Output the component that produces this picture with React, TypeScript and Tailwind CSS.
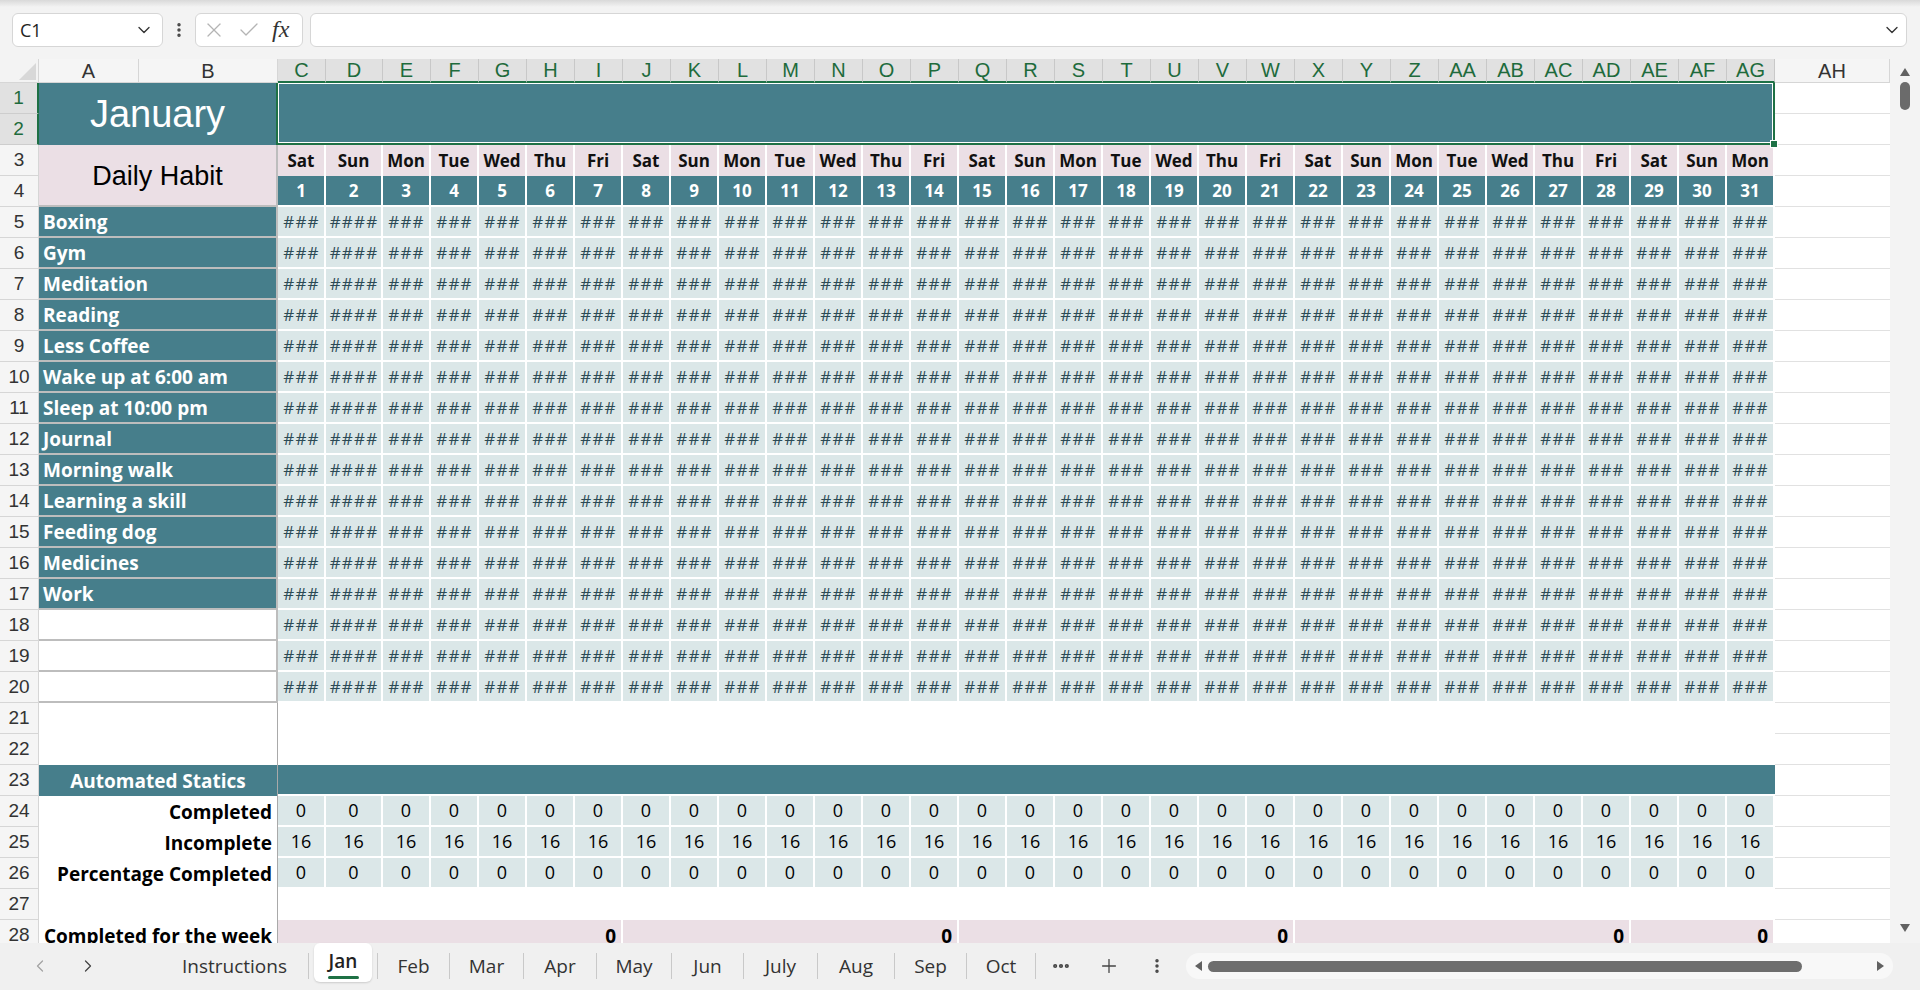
import { ChevronDown, ChevronLeft, ChevronRight, X, Check, Plus, EllipsisVertical, Ellipsis } from "lucide-react";

const COLS = Array.from({ length: 34 }, (_, i) =>
  i < 26 ? String.fromCharCode(65 + i) : "A" + String.fromCharCode(65 + i - 26)
);
const DAY_NAMES = ["Sat", "Sun", "Mon", "Tue", "Wed", "Thu", "Fri"];
const DAYS = Array.from({ length: 31 }, (_, i) => i + 1);
const HABITS = [
  "Boxing",
  "Gym",
  "Meditation",
  "Reading",
  "Less Coffee",
  "Wake up at 6:00 am",
  "Sleep at 10:00 pm",
  "Journal",
  "Morning walk",
  "Learning a skill",
  "Feeding dog",
  "Medicines",
  "Work",
  "",
  "",
  "",
];
const TABS = [
  { name: "Jan", w: "w-[68px]" },
  { name: "Feb", w: "w-[71px]" },
  { name: "Mar", w: "w-[73px]" },
  { name: "Apr", w: "w-[72px]" },
  { name: "May", w: "w-[74px]" },
  { name: "Jun", w: "w-[71px]" },
  { name: "July", w: "w-[73px]" },
  { name: "Aug", w: "w-[76px]" },
  { name: "Sep", w: "w-[71px]" },
  { name: "Oct", w: "w-[68px]" },
];

function RowHead({ n, active }: { n: number; active?: boolean }) {
  return (
    <div
      className={
        active
          ? "flex items-center justify-center text-[19px] bg-[#e1e1e1] text-[#1e6b3c] border-r-2 border-r-[#1e7145] border-b border-b-[#cdcdcd]"
          : "flex items-center justify-center text-[19px] bg-[#f5f5f5] text-[#333] border-r border-b border-[#d6d6d6]"
      }
    >
      {n}
    </div>
  );
}

function AH() {
  return <div className="bg-white border-b border-[#e1e1e1]" />;
}

function FormulaBar() {
  return (
    <div className="h-[59px] shrink-0 bg-[#f3f3f3]">
      <div className="h-[7px] bg-linear-to-b from-[#d9d9d9] to-[#f3f3f3]" />
      <div className="flex items-center h-[34px] mt-[6px]">
        <div className="ml-[12px] w-[151px] h-full bg-white border border-[#d6d6d6] rounded-md flex items-center justify-between pl-[7px] pr-[8px] text-[18px] text-[#222] font-['Open_Sans',sans-serif]">
          <span>C1</span>
          <ChevronDown size={20} strokeWidth={1.6} className="text-[#333]" />
        </div>
        <div className="w-[32px] flex justify-center text-[#444]">
          <EllipsisVertical size={18} strokeWidth={2.6} />
        </div>
        <div className="w-[108px] h-full bg-white border border-[#d6d6d6] rounded-md flex items-center pl-[6px] gap-[11px]">
          <X size={24} strokeWidth={1.3} className="text-[#b4b4b4]" />
          <Check size={24} strokeWidth={1.3} className="text-[#b4b4b4]" />
          <span className="text-[24px] italic text-[#333] font-['Liberation_Serif',serif] leading-none -mt-[3px]">fx</span>
        </div>
        <div className="ml-[7px] mr-[13px] flex-1 h-full bg-white border border-[#d6d6d6] rounded-md flex items-center justify-end pr-[4px]">
          <ChevronDown size={20} strokeWidth={1.6} className="text-[#333]" />
        </div>
      </div>
    </div>
  );
}

function Sheet() {
  const teal = "bg-[#467e8b]";
  const dataCell =
    "bg-[#dbe7e8] border-r-2 border-b-2 border-white flex items-center justify-center";
  const rows: React.ReactNode[] = [];

  // header row
  rows.push(
    <div key="corner" className="bg-[#f3f3f3] border-r border-b border-[#d6d6d6] flex items-end justify-end p-[2px]">
      <svg width="17" height="17" viewBox="0 0 17 17">
        <polygon points="17,0 17,17 0,17" fill="#d8d8d8" />
      </svg>
    </div>
  );
  COLS.forEach((c, i) => {
    const sel = i >= 2 && i <= 32;
    rows.push(
      <div
        key={"h" + c}
        className={
          sel
            ? "flex items-center justify-center text-[20px] bg-[#e1e1e1] text-[#1e6b3c] border-r border-r-[#c8c8c8] border-b-2 border-b-[#1e7145]"
            : "flex items-center justify-center text-[20px] bg-[#f5f5f5] text-[#333] border-r border-b border-[#d6d6d6]"
        }
      >
        {c}
      </div>
    );
  });

  // rows 1-2
  rows.push(<RowHead key="r1" n={1} active />);
  rows.push(
    <div
      key="jan"
      className={`col-span-2 row-span-2 ${teal} text-white text-[38px] flex items-center justify-center border-r-2 border-[#1e7145]`}
    >
      January
    </div>
  );
  rows.push(
    <div key="sel" className="col-span-31 row-span-2 relative border-2 border-l-0 border-t-0 border-[#1e7145]">
      <div className={`h-full ${teal} border border-white`} />
      <div className="absolute -right-[5px] -bottom-[5px] w-[8px] h-[8px] bg-[#1e7145] border border-white" />
    </div>
  );
  rows.push(<AH key="ah1" />);
  rows.push(<RowHead key="r2" n={2} active />);
  rows.push(<AH key="ah2" />);

  // rows 3-4
  rows.push(<RowHead key="r3" n={3} />);
  rows.push(
    <div
      key="dh"
      className="col-span-2 row-span-2 bg-[#ebdfe5] text-black text-[27px] flex items-center justify-center border-r-2 border-b-2 border-[#bdbdbd] pt-[3px]"
    >
      Daily Habit
    </div>
  );
  DAYS.forEach((d) =>
    rows.push(
      <div
        key={"dn" + d}
        className="bg-[#ebdfe5] border-r-2 border-white flex items-center justify-center font-bold text-[17px] text-[#111] font-['Open_Sans',sans-serif]"
      >
        {DAY_NAMES[(d - 1) % 7]}
      </div>
    )
  );
  rows.push(<AH key="ah3" />);
  rows.push(<RowHead key="r4" n={4} />);
  DAYS.forEach((d) =>
    rows.push(
      <div
        key={"dd" + d}
        className={`${teal} border-r-2 border-b-2 border-white flex items-center justify-center font-bold text-[17px] text-white font-['Open_Sans',sans-serif]`}
      >
        {d}
      </div>
    )
  );
  rows.push(<AH key="ah4" />);

  // habits rows 5-20
  HABITS.forEach((h, idx) => {
    const r = idx + 5;
    rows.push(<RowHead key={"r" + r} n={r} />);
    rows.push(
      <div
        key={"hb" + r}
        className={`col-span-2 ${h ? teal : "bg-white"} border-r-2 border-b-2 border-[#bdbdbd] flex items-center pl-[4px] pt-[2px] text-white font-bold text-[19px] font-['Open_Sans',sans-serif] whitespace-nowrap`}
      >
        {h}
      </div>
    );
    DAYS.forEach((d) =>
      rows.push(
        <div
          key={`c${r}-${d}`}
          className={`${dataCell} text-[17px] tracking-[1.2px] pl-[1px] text-[#2b4a55] font-['Open_Sans',sans-serif]`}
        >
          {d === 2 ? "####" : "###"}
        </div>
      )
    );
    rows.push(<AH key={"ah" + r} />);
  });

  // rows 21-22
  [21, 22].forEach((r) => {
    rows.push(<RowHead key={"r" + r} n={r} />);
    rows.push(<div key={"ab" + r} className="col-span-2 bg-white border-r border-[#a9a9a9]" />);
    rows.push(<div key={"cg" + r} className="col-span-31 bg-white" />);
    rows.push(<AH key={"ah" + r} />);
  });

  // row 23
  rows.push(<RowHead key="r23" n={23} />);
  rows.push(
    <div
      key="auto"
      className={`col-span-2 ${teal} border-r border-[#a9a9a9] flex items-center justify-center pt-[2px] text-white font-bold text-[19px] font-['Open_Sans',sans-serif]`}
    >
      Automated Statics
    </div>
  );
  rows.push(<div key="auto2" className={`col-span-31 ${teal} border-b-2 border-white`} />);
  rows.push(<AH key="ah23" />);

  // rows 24-26
  const stats: [string, string][] = [
    ["Completed", "0"],
    ["Incomplete", "16"],
    ["Percentage Completed", "0"],
  ];
  stats.forEach(([label, v], i) => {
    const r = 24 + i;
    rows.push(<RowHead key={"r" + r} n={r} />);
    rows.push(
      <div
        key={"st" + r}
        className="col-span-2 bg-white border-r border-[#a9a9a9] flex items-center justify-end pr-[5px] pt-[2px] text-black font-bold text-[19px] font-['Open_Sans',sans-serif] whitespace-nowrap"
      >
        {label}
      </div>
    );
    DAYS.forEach((d) =>
      rows.push(
        <div key={`s${r}-${d}`} className={`${dataCell} text-[18px] text-black font-['Open_Sans',sans-serif]`}>
          {v}
        </div>
      )
    );
    rows.push(<AH key={"ah" + r} />);
  });

  // row 27
  rows.push(<RowHead key="r27" n={27} />);
  rows.push(<div key="ab27" className="col-span-2 bg-white border-r border-[#a9a9a9]" />);
  rows.push(<div key="cg27" className="col-span-31 bg-white" />);
  rows.push(<AH key="ah27" />);

  // row 28
  rows.push(<RowHead key="r28" n={28} />);
  rows.push(
    <div
      key="wk"
      className="col-span-2 bg-white border-r border-[#a9a9a9] flex items-center pl-[5px] pt-[2px] text-black font-bold text-[19px] font-['Open_Sans',sans-serif] whitespace-nowrap overflow-hidden"
    >
      Completed for the week
    </div>
  );
  ["col-span-7", "col-span-7", "col-span-7", "col-span-7", "col-span-3"].forEach((span, i) =>
    rows.push(
      <div
        key={"wk" + i}
        className={`${span} bg-[#ebdfe5] border-r-2 border-white flex items-center justify-end pr-[5px] pt-[2px] text-black font-bold text-[19px] font-['Open_Sans',sans-serif]`}
      >
        0
      </div>
    )
  );
  rows.push(<AH key="ah28" />);

  return (
    <div className="grid grid-cols-[39px_100px_139px_48px_57px_repeat(29,48px)_1fr] grid-rows-[24px_repeat(28,31px)] text-[18px] font-['Liberation_Sans',Arial,sans-serif]">
      {rows}
    </div>
  );
}

function VScroll() {
  return (
    <div className="w-[30px] shrink-0 bg-[#f3f3f3] flex flex-col items-center">
      <svg width="12" height="10" viewBox="0 0 12 10" className="mt-[8px]">
        <polygon points="6,1 11,9 1,9" fill="#616161" />
      </svg>
      <div className="mt-[5px] w-[10px] h-[28px] rounded-full bg-[#6b6b6b]" />
      <div className="flex-1" />
      <svg width="12" height="10" viewBox="0 0 12 10" className="mb-[10px]">
        <polygon points="1,1 11,1 6,9" fill="#616161" />
      </svg>
    </div>
  );
}

function TabBar() {
  const sep = <div className="w-px h-[26px] bg-[#c9c9c9] mt-[10px]" />;
  return (
    <div className="h-[47px] shrink-0 bg-[#f0f0f0] flex items-start text-[19px] text-[#333] font-['Open_Sans',sans-serif]">
      <div className="w-[161px] h-[46px] flex items-center">
        <ChevronLeft size={20} strokeWidth={1.5} className="ml-[30px] text-[#a3a3a3]" />
        <ChevronRight size={20} strokeWidth={1.5} className="ml-[28px] text-[#444]" />
      </div>
      <div className="w-[147px] h-[46px] flex items-center justify-center">Instructions</div>
      {sep}
      {TABS.map((t, i) => (
        <div key={t.name} className="flex items-start">
          {i === 0 ? (
            <div className={`${t.w} h-[46px] flex justify-center`}>
              <div className="mx-[5px] w-full h-[39px] bg-white rounded-md shadow-[0_1px_2px_rgba(0,0,0,0.15)] flex flex-col items-center justify-center">
                <span className="font-semibold text-[#222] mt-[1px]">{t.name}</span>
                <span className="w-[31px] h-[3px] rounded-full bg-[#1e7145] mt-[1px]" />
              </div>
            </div>
          ) : (
            <div className={`${t.w} h-[46px] flex items-center justify-center`}>{t.name}</div>
          )}
          {sep}
        </div>
      ))}
      <div className="w-[48px] h-[46px] flex items-center justify-center ml-[1px]">
        <Ellipsis size={20} strokeWidth={3} className="text-[#444]" />
      </div>
      <div className="w-[48px] h-[46px] flex items-center justify-center">
        <Plus size={22} strokeWidth={1.4} className="text-[#444]" />
      </div>
      <div className="w-[48px] h-[46px] flex items-center justify-center">
        <EllipsisVertical size={18} strokeWidth={2.6} className="text-[#444]" />
      </div>
      <div className="ml-[5px] mt-[10px] w-[707px] h-[26px] rounded-full bg-[#f8f8f8] flex items-center px-[8px]">
        <svg width="9" height="12" viewBox="0 0 9 12">
          <polygon points="8,1 8,11 1,6" fill="#616161" />
        </svg>
        <div className="ml-[5px] w-[594px] h-[11px] rounded-full bg-[#6e6e6e]" />
        <div className="flex-1" />
        <svg width="9" height="12" viewBox="0 0 9 12">
          <polygon points="1,1 1,11 8,6" fill="#616161" />
        </svg>
      </div>
    </div>
  );
}

export default function App() {
  return (
    <div className="w-[1920px] h-[990px] overflow-hidden bg-[#f3f3f3] flex flex-col">
      <FormulaBar />
      <div className="flex flex-1 min-h-0">
        <div className="flex-1 overflow-hidden bg-white">
          <Sheet />
        </div>
        <VScroll />
      </div>
      <TabBar />
    </div>
  );
}
